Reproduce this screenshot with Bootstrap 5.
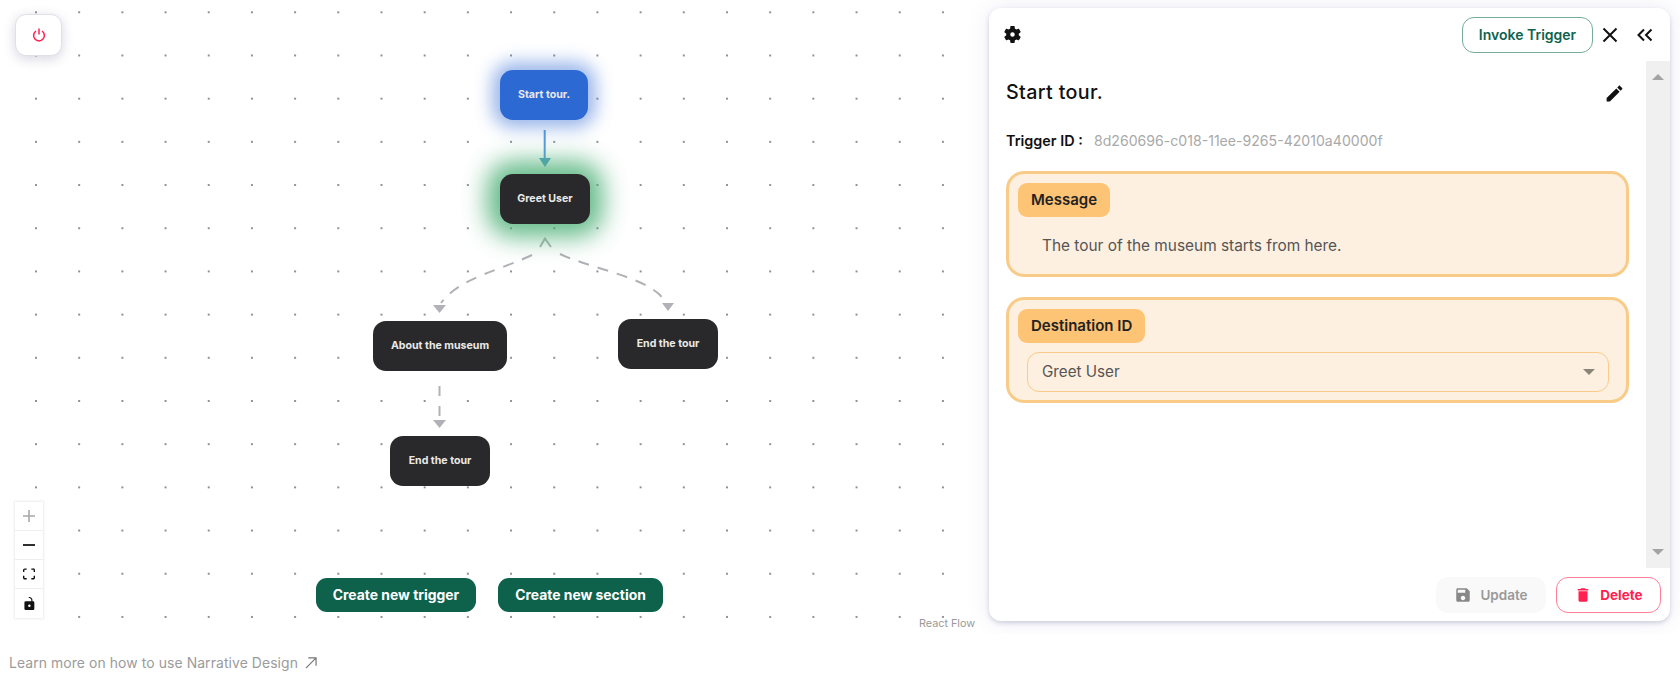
<!DOCTYPE html>
<html lang="en">
<head>
    <meta charset="UTF-8">
    <meta name="viewport" content="width=device-width, initial-scale=1.0">
    <title>Narrative Design</title>
    <link href="https://cdn.jsdelivr.net/npm/bootstrap@5.3.3/dist/css/bootstrap.min.css" rel="stylesheet">
    <script src="https://cdn.jsdelivr.net/npm/bootstrap@5.3.3/dist/js/bootstrap.bundle.min.js"></script>
    <style>
        html, body { height: 675px; overflow: hidden; background: #fff; }
        body { font-family: Inter, "Noto Sans", sans-serif; color: #111; }

        .top-row { height: 634px; overflow: hidden; }

        /* flow canvas */
        .flow-canvas {
            position: relative;
            width: 980px;
            flex: none;
            background-image: radial-gradient(circle, #8f8f96 1.1px, transparent 1.4px);
            background-size: 43.2px 43.2px;
            background-position: 14.4px -9.3px;
        }
        .edges { position: absolute; left: 0; top: 0; width: 980px; height: 634px; }
        .flow-node {
            position: absolute;
            height: 50px;
            border-radius: 13px;
            background: #29292b;
            color: #e9e9e9;
            font-size: 10.6px;
            font-weight: 700;
        }
        .node-start { left: 500px; top: 70px; width: 88px; background: #2d69d3; box-shadow: 0 0 17px 8px rgba(45,105,211,.48); }
        .node-greet { left: 500px; top: 174px; width: 90px; box-shadow: 0 0 24px 13px rgba(68,172,112,.82); }
        .node-about { left: 373px; top: 321px; width: 134px; }
        .node-end-r { left: 618px; top: 319px; width: 100px; }
        .node-end-b { left: 390px; top: 436px; width: 100px; }

        .power-btn {
            position: absolute; left: 15px; top: 14px; width: 47px; height: 42px;
            background: #fff; border: 1px solid #e0e0e6; border-radius: 11px;
            box-shadow: 0 3px 12px rgba(70,70,120,.22);
        }
        .zoom-box {
            position: absolute; left: 15px; top: 502px; width: 28px;
            background: #fff; box-shadow: 0 0 2px 1px rgba(0,0,0,.08);
        }
        .zoom-box > div { height: 29px; border-bottom: 1px solid #eee; }
        .zoom-box > div:last-child { border-bottom: 0; }

        .create-row { position: absolute; left: 316px; top: 578px; gap: 22px; }
        .btn-create {
            height: 34px; padding: 0 16px; border-radius: 11px; border: 0;
            background: #0e614b; color: #fff; font-size: 13.9px; font-weight: 700;
        }
        .btn-create:hover { background: #0e614b; color: #fff; }
        .btn-one { width: 160px; }
        .btn-two { width: 165px; }
        .flow-credit { position: absolute; left: 919px; top: 617px; font-size: 10.8px; color: #999; line-height: 14px; }

        /* side panel */
        .panel-wrap { flex: 1; padding: 8px 10px 13px 9px; }
        .side-panel {
            height: 613px; background: #fff; border-radius: 12px;
            box-shadow: 0 2px 4px rgba(70,70,120,.22), 0 0 22px rgba(90,90,170,.12);
        }
        .panel-head { height: 53px; padding: 0 17px 0 13px; flex: none; }
        .btn-invoke {
            width: 131px; height: 36px; padding: 0; border-radius: 12px;
            border: 1px solid #75ab9b; color: #0f634d; background: #fff;
            font-size: 14px; font-weight: 600;
        }
        .chevrons-gap { margin-left: 18px; }
        .panel-main { min-height: 0; flex: 1; }
        .panel-scroll { flex: 1; padding: 0 17px; }
        .title-row { height: 64px; }
        .panel-title { font-size: 19.7px; font-weight: 500; letter-spacing: .35px; margin: 0; }
        .trigger-row { height: 31px; margin-bottom: 15px; }
        .trigger-label { font-size: 14.4px; font-weight: 600; width: 88px; }
        .trigger-value { color: #a9a9a9; font-weight: 400; font-size: 14.1px; }
        .field-box {
            background: #fdf0e0; border: 3px solid #f8cb88; border-radius: 18px;
            padding: 9px; margin-bottom: 20px; width: 623px;
        }
        .box-message { height: 106px; }
        .box-dest { height: 106px; }
        .field-tag {
            display: inline-block; height: 34px; line-height: 34px; padding: 0 13px;
            background: #fec476; border-radius: 9px; font-size: 15px; font-weight: 600; color: #222;
        }
        .field-text { font-size: 15.4px; color: #555; padding: 18px 0 0 24px; line-height: 22px; }
        .select-wrap { position: relative; margin: 9px 0 0 9px; width: 582px; }
        .dest-select {
            height: 40px; padding: 0 14px; font-size: 15.2px; color: #555;
            background: #fdf0e0; background-image: none;
            border: 1px solid #f8cb88; border-radius: 12px;
        }
        .select-arrow {
            position: absolute; right: 14px; top: 17px; width: 0; height: 0;
            border-left: 6px solid transparent; border-right: 6px solid transparent; border-top: 6px solid #8a8578;
        }
        .fake-scrollbar { width: 24px; flex: none; background: #f0f0f0; padding: 13px 6px; }
        .tri-up { width: 0; height: 0; border-left: 6px solid transparent; border-right: 6px solid transparent; border-bottom: 6px solid #a3a3a3; }
        .tri-down { width: 0; height: 0; border-left: 6px solid transparent; border-right: 6px solid transparent; border-top: 6px solid #a3a3a3; }
        .panel-foot { height: 53px; flex: none; padding: 9px 9px 0 0; gap: 10px; }
        .btn-update, .btn-delete {
            height: 36px; padding: 0; border-radius: 12px; font-size: 13.5px; font-weight: 600; gap: 8px;
        }
        .btn-update { width: 110px; background: #f9f9f9; border: 0; color: #999; }
        .btn-update:disabled { background: #f9f9f9; color: #999; opacity: 1; }
        .btn-delete { width: 105px; background: #fff; border: 1px solid #ff8097; color: #ff2150; font-weight: 700; }

        .learn-row { height: 41px; padding: 17px 0 0 9px; font-size: 13.9px; color: #9b9b9b; gap: 7px; letter-spacing: .1px; }
    </style>
</head>
<body>

<div class="top-row d-flex">
    <div class="flow-canvas">
        <svg class="edges" viewBox="0 0 980 634" fill="none">
            <path d="M544.7 130V159" stroke="#5b9be0" stroke-width="2"/>
            <path d="M539 158H551L545 167Z" fill="#5aa0c8"/>
            <path d="M540 247L545 238.500L551 247" stroke="#b1b1b7" stroke-width="2"/>
            <path d="M532 255C498 271 467 276 445 298L441 303" stroke="#b1b1b7" stroke-width="2" stroke-dasharray="11 9"/>
            <path d="M433 305H446L439.500 313Z" fill="#b1b1b7"/>
            <path d="M560 254C590 268 640 276 660 295L667 304" stroke="#b1b1b7" stroke-width="2" stroke-dasharray="11 9"/>
            <path d="M662 303H674L668 311Z" fill="#b1b1b7"/>
            <path d="M439.500 386V421" stroke="#b1b1b7" stroke-width="2" stroke-dasharray="10 10"/>
            <path d="M433 420H446L439.500 428Z" fill="#b1b1b7"/>
        </svg>

        <div class="flow-node node-start d-flex align-items-center justify-content-center">Start tour.</div>
        <div class="flow-node node-greet d-flex align-items-center justify-content-center">Greet User</div>
        <div class="flow-node node-about d-flex align-items-center justify-content-center">About the museum</div>
        <div class="flow-node node-end-r d-flex align-items-center justify-content-center">End the tour</div>
        <div class="flow-node node-end-b d-flex align-items-center justify-content-center">End the tour</div>

        <div class="power-btn d-flex align-items-center justify-content-center">
            <svg width="14" height="14" viewBox="0 0 14 14" fill="none" stroke="#ff2150" stroke-width="1.500">
                <path d="M4 3A5.400 5.400 0 1 0 10 3"/>
                <path d="M7 .5V6.500"/>
            </svg>
        </div>

        <div class="zoom-box">
            <div class="d-flex align-items-center justify-content-center">
                <svg width="12" height="12" viewBox="0 0 32 32" fill="#a8a8a8"><path d="M32 18.133H18.133V32h-4.266V18.133H0v-4.266h13.867V0h4.266v13.867H32z"/></svg>
            </div>
            <div class="d-flex align-items-center justify-content-center">
                <svg width="12" height="2" viewBox="0 0 32 5" fill="#222"><path d="M0 0h32v5H0z"/></svg>
            </div>
            <div class="d-flex align-items-center justify-content-center">
                <svg width="12" height="12" viewBox="0 0 32 30" fill="#111"><path d="M3.692 4.63c0-.53.4-.938.939-.938h5.215V0H4.708C2.13 0 0 2.054 0 4.63v5.216h3.692V4.631zM27.354 0h-5.2v3.692h5.170c.53 0 .984.4.984.939v5.215H32V4.631A4.624 4.624 0 0027.354 0zm.954 24.830c0 .532-.4.94-.939.94h-5.215v3.768h5.215c2.577 0 4.631-2.130 4.631-4.707v-5.139h-3.692v5.139zm-23.677.94c-.531 0-.939-.4-.939-.94v-5.138H0v5.139c0 2.577 2.130 4.707 4.708 4.707h5.138V25.770H4.631z"/></svg>
            </div>
            <div class="d-flex align-items-center justify-content-center">
                <svg width="11" height="13" viewBox="0 0 25 32" fill="#111"><path d="M21.333 10.667H19.810V7.619C19.810 3.429 16.380 0 12.190 0c-4.114 1.828-1.370 2.133.305 2.438 1.676.305 4.420 2.590 4.420 5.181v3.048H3.047A3.056 3.056 0 000 13.714v15.238A3.056 3.056 0 003.048 32h18.285a3.056 3.056 0 003.048-3.048V13.714a3.056 3.056 0 00-3.048-3.047zM12.190 24.533a3.056 3.056 0 01-3.047-3.047 3.056 3.056 0 013.047-3.048 3.056 3.056 0 013.048 3.048 3.056 3.056 0 01-3.048 3.047z"/></svg>
            </div>
        </div>

        <div class="create-row d-flex">
            <button type="button" class="btn btn-create btn-one">Create new trigger</button>
            <button type="button" class="btn btn-create btn-two">Create new section</button>
        </div>
        <div class="flow-credit">React Flow</div>
    </div>

    <div class="panel-wrap">
        <div class="side-panel d-flex flex-column">
            <div class="panel-head d-flex align-items-center">
                <svg width="21" height="21" viewBox="0 0 24 24" fill="#111" fill-rule="evenodd"><path d="M19.140 12.940c.04-.3.06-.61.06-.94 0-.32-.02-.64-.07-.94l2.030-1.580c.18-.14.23-.41.12-.61l-1.920-3.320c-.12-.22-.37-.29-.59-.22l-2.390.96c-.5-.38-1.030-.7-1.620-.94l-.36-2.540c-.04-.24-.24-.41-.48-.41h-3.840c-.24 0-.43.17-.47.41l-.36 2.540c-.59.24-1.130.57-1.620.94l-2.390-.96c-.22-.08-.47 0-.59.22L2.740 8.870c-.12.21-.08.47.12.61l2.030 1.580c-.05.3-.09.63-.09.94s.02.64.07.94l-2.030 1.580c-.18.14-.23.41-.12.61l1.920 3.320c.12.22.37.29.59.22l2.390-.96c.5.38 1.030.7 1.620.94l.36 2.540c.05.24.24.41.48.41h3.840c.24 0 .44-.17.47-.41l.36-2.540c.59-.24 1.130-.56 1.620-.94l2.390.96c.22.08.47 0 .59-.22l1.920-3.320c.12-.22.07-.47-.12-.61l-2.010-1.580zM12 14.600a2.600 2.600 0 1 1 0-5.200 2.600 2.600 0 0 1 0 5.200z"/></svg>
                <div class="ms-auto d-flex align-items-center">
                    <button type="button" class="btn btn-invoke">Invoke Trigger</button>
                    <svg class="ms-2" width="18" height="18" viewBox="0 0 18 18" fill="none" stroke="#111" stroke-width="2"><path d="M2.500 2.500L15.500 15.500M15.500 2.500L2.500 15.500"/></svg>
                    <svg class="chevrons-gap" width="16" height="14" viewBox="0 0 16 14" fill="none" stroke="#111" stroke-width="2"><path d="M7 1.500L1.500 7L7 12.500M14.500 1.500L9 7L14.500 12.500"/></svg>
                </div>
            </div>

            <div class="panel-main d-flex">
                <div class="panel-scroll">
                    <div class="title-row d-flex align-items-center justify-content-between">
                        <h5 class="panel-title">Start tour.</h5>
                        <svg class="me-1" width="21" height="21" viewBox="0 0 24 24" fill="#111"><path d="M3 17.250V21h3.750L17.810 9.940l-3.750-3.750L3 17.250zM20.710 7.040c.39-.39.39-1.020 0-1.410l-2.340-2.340c-.39-.39-1.020-.39-1.410 0l-1.830 1.830 3.750 3.750 1.830-1.830z"/></svg>
                    </div>
                    <div class="trigger-row d-flex align-items-center">
                        <span class="trigger-label">Trigger ID :</span>
                        <span class="trigger-value">8d260696-c018-11ee-9265-42010a40000f</span>
                    </div>
                    <div class="field-box box-message">
                        <span class="field-tag">Message</span>
                        <div class="field-text">The tour of the museum starts from here.</div>
                    </div>
                    <div class="field-box box-dest">
                        <span class="field-tag">Destination ID</span>
                        <div class="select-wrap">
                            <select class="form-select dest-select">
                                <option>Greet User</option>
                            </select>
                            <span class="select-arrow"></span>
                        </div>
                    </div>
                </div>
                <div class="fake-scrollbar d-flex flex-column justify-content-between">
                    <div class="tri-up"></div>
                    <div class="tri-down"></div>
                </div>
            </div>

            <div class="panel-foot d-flex justify-content-end">
                <button type="button" class="btn btn-update d-flex align-items-center justify-content-center" disabled>
                    <svg width="18" height="18" viewBox="0 0 24 24" fill="#888"><path d="M17 3H5c-1.110 0-2 .9-2 2v14c0 1.100.89 2 2 2h14c1.100 0 2-.9 2-2V7l-4-4zm-5 16c-1.660 0-3-1.340-3-3s1.340-3 3-3 3 1.340 3 3-1.340 3-3 3zm3-10H5V5h10v4z"/></svg>
                    Update
                </button>
                <button type="button" class="btn btn-delete d-flex align-items-center justify-content-center">
                    <svg width="18" height="18" viewBox="0 0 24 24" fill="#ff2150"><path d="M6 19c0 1.100.9 2 2 2h8c1.100 0 2-.9 2-2V7H6v12zM19 4h-3.500l-1-1h-5l-1 1H5v2h14V4z"/></svg>
                    Delete
                </button>
            </div>
        </div>
    </div>
</div>

<div class="learn-row d-flex align-items-center">
    <span>Learn more on how to use Narrative Design</span>
    <svg width="12" height="12" viewBox="0 0 13 13" fill="none" stroke="#777" stroke-width="1.300"><path d="M1 12L12 1M3.500 1H12V9.500"/></svg>
</div>

</body>
</html>
